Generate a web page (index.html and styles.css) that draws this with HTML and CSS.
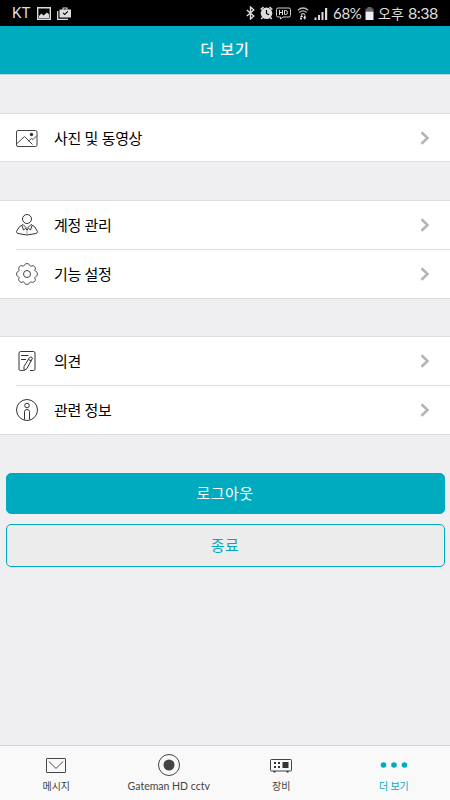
FILE: index.html
```html
<!DOCTYPE html>
<html lang="ko">
<head>
	<meta charset="utf-8" />
	<meta name="viewport" content="width=device-width, initial-scale=1">
	<title>더 보기</title>
	<link rel="stylesheet" href="styles.css">
</head>
<body>
	<div id="wrapper">
		<div class="status">
			<span class="carrier">KT</span>
			<svg class="st_picture" width="14" height="13" viewBox="0 0 14 13"><path fill="none" stroke="#ddd" stroke-width="1.4" d="M.7.7h12.6v11.6H.7z"/><path fill="#ddd" d="M2 11V9l2.500-2.500 2 2L10 5.500l2 2V11z"/></svg>
			<svg class="st_store" width="14" height="13" viewBox="0 0 14 13"><path fill="none" stroke="#ddd" stroke-width="1.300" d="M.7 4v8.300H11"/><path fill="#ddd" fill-rule="evenodd" d="M2.500 2.500h3V.5h5v2H14v8H2.500zM6.500 2.500h3v-1h-3zM5.700 6.300l2 2 3.500-3.500-.8-.8-2.700 2.700-1.200-1.200z"/></svg>
			<span class="spacer"></span>
			<svg class="st_bt" width="9" height="14" viewBox="0 0 9 14"><path fill="none" stroke="#ddd" stroke-width="1.400" d="M.8 4l7 6-3.300 3V1l3.300 3-7 6"/></svg>
			<svg class="st_alarm" width="13" height="14" viewBox="0 0 13 14"><circle cx="6.500" cy="7.300" r="5.800" fill="#ddd"/><path fill="none" stroke="#ddd" stroke-width="1.600" d="M.7 3.500L3.500 1M12.300 3.500L9.500 1M2.500 11.500L1.300 13M10.500 11.500l1.200 1.500"/><path fill="none" stroke="#000" stroke-width="1.200" d="M6.500 4v3.500l2.700 1.200"/></svg>
			<svg class="st_hd" width="15" height="13" viewBox="0 0 15 13"><path fill="none" stroke="#ccc" d="M2 1h11q1.500 0 1.500 1.500v6q0 1.500-1.500 1.500H7l-2.500 2V10H2Q.5 10 .5 8.500v-6Q.5 1 2 1z"/><path fill="none" stroke="#ddd" d="M3.500 3v5M6.500 3v5M3.500 5.500h3M8.500 3.500v4h1q2 0 2-2t-2-2z"/></svg>
			<svg class="st_wifi" width="12" height="13" viewBox="0 0 12 13"><path fill="none" stroke="#bbb" stroke-width="1.200" d="M.8 3.300q5.200-4.600 10.400 0M2.300 5.500q3.700-3.300 7.400 0M4 7.500q2-1.700 4 0"/><path fill="#ddd" d="M3 10l1.700-2.300L6.300 10zM6 10.300h3.400l-1.700 2.400zM3 10.500h2v2H3zM7 8.500h1.500v2H7z"/></svg>
			<svg class="st_signal" width="14" height="13" viewBox="0 0 14 13"><path fill="#ddd" d="M.5 10.500h2V13h-2zM4 8h2v5H4zM7.500 5h2v8h-2zM11 1h2.200v12H11z"/></svg>
			<span class="percent">68%</span>
			<svg class="st_battery" width="9" height="13" viewBox="0 0 9 13"><path fill="#666" d="M2.500 0h4v1.500h-4zM.5 1.500h8v3h-8z"/><path fill="#eee" d="M.5 4.500h8V13h-8z"/></svg>
			<span class="ampm">오후</span>
			<span class="clock">8:38</span>
		</div>

		<h1 class="title">더 보기</h1>

		<div class="content">
			<ul class="group">
				<li class="row">
					<svg class="icon" viewBox="0 0 24 24"><g fill="none" stroke="#444"><rect x="1.500" y="4.500" width="20.500" height="16" rx="1.500"/><path d="M2 17.500l7.500-7 8 8M13.500 15l3-2.500 1.500 1 4-4"/></g><circle cx="16.500" cy="8.500" r="1.700" fill="#333"/></svg>
					<span class="label">사진 및 동영상</span>
					<svg class="arrow" viewBox="0 0 10 14"><path d="M1.500 1.200L7.500 7l-6 5.800"/></svg>
				</li>
			</ul>

			<ul class="group">
				<li class="row">
					<svg class="icon" viewBox="0 0 24 24"><g fill="none" stroke="#333"><circle cx="12" cy="6" r="4.500"/><path d="M8 11.500Q4 12.500 1.500 18.500q0 1.500 1.500 2 9 3 18 0 1.500-.5 1.500-2Q20 12.500 16 11.500M8 11.500l4 4 4-4M7 12.500l1.500 4.500 2-1.500 1.500 1.500 1.500-1.500 2 1.500L17 12.500"/></g><path stroke="#999" d="M12 17v5"/></svg>
					<span class="label">계정 관리</span>
					<svg class="arrow" viewBox="0 0 10 14"><path d="M1.500 1.200L7.500 7l-6 5.800"/></svg>
				</li>
				<li class="row">
					<svg class="icon" viewBox="0 0 24 24"><g fill="none" stroke="#444"><path d="M9.200 3.500C9.800 1 14.200 1 14.800 3.500Q15.300 4.500 16.300 4C18.600 2.700 21.300 5.400 20 7.700Q19.500 8.700 20.500 9.200C23 9.800 23 14.200 20.500 14.800Q19.500 15.300 20 16.300C21.300 18.600 18.600 21.300 16.300 20Q15.300 19.500 14.800 20.500C14.200 23 9.800 23 9.200 20.500Q8.700 19.500 7.700 20C5.400 21.300 2.700 18.600 4 16.300Q4.500 15.300 3.500 14.800C1 14.200 1 9.800 3.500 9.200Q4.500 8.700 4 7.700C2.700 5.400 5.400 2.700 7.700 4Q8.700 4.500 9.200 3.500z"/><circle cx="12" cy="12" r="3.500"/></g></svg>
					<span class="label">기능 설정</span>
					<svg class="arrow" viewBox="0 0 10 14"><path d="M1.500 1.200L7.500 7l-6 5.800"/></svg>
				</li>
			</ul>

			<ul class="group">
				<li class="row">
					<svg class="icon" viewBox="0 0 24 24"><g fill="none" stroke="#333"><path d="M8.500 21.500H5.500q-1.500 0-1.500-1.500V4q0-1.500 1.500-1.500h13Q20 2.500 20 4v16q0 1.500-1.500 1.500H15M6 6.500h7.500M6 10.500h5"/><path d="M9 17.500L14.500 8.500q1.500-1.500 3 .5L12 19.500 9 21.500zM13.500 10.500l3 1.500"/></g></svg>
					<span class="label">의견</span>
					<svg class="arrow" viewBox="0 0 10 14"><path d="M1.500 1.200L7.500 7l-6 5.800"/></svg>
				</li>
				<li class="row">
					<svg class="icon" viewBox="0 0 24 24"><g fill="none" stroke="#333"><circle cx="12" cy="12" r="10.500"/><circle cx="12" cy="7.500" r="2.300"/><path d="M9.500 21.500V13.500q0-2 2.500-2t2.500 2v8"/></g></svg>
					<span class="label">관련 정보</span>
					<svg class="arrow" viewBox="0 0 10 14"><path d="M1.500 1.200L7.500 7l-6 5.800"/></svg>
				</li>
			</ul>

			<button class="btn logout">로그아웃</button>
			<button class="btn exit">종료</button>
		</div>

		<div class="tabs">
			<a class="tab">
				<svg viewBox="0 0 24 24"><g fill="none" stroke="#444"><rect x="2.500" y="5.500" width="19" height="14" rx=".5"/><path d="M5 8.500l7 7 7-7"/></g></svg>
				<span>메시지</span>
			</a>
			<a class="tab">
				<svg viewBox="0 0 24 24"><circle cx="12" cy="12" r="10.500" fill="none" stroke="#444"/><circle cx="12" cy="12" r="5.500" fill="#444"/></svg>
				<span class="latin">Gateman HD cctv</span>
			</a>
			<a class="tab">
				<svg viewBox="0 0 24 24"><rect x="1.500" y="6.500" width="21" height="11.500" rx=".8" fill="none" stroke="#444"/><path fill="#333" d="M13.500 9h6v6h-6zM5 9h2v2H5zM9 9h2v2H9zM5 13h2v2H5zM9 13h2v2H9zM4.500 18h2v1.500h-2zM17.500 18h2v1.500h-2z"/></svg>
				<span>장비</span>
			</a>
			<a class="tab active">
				<svg class="dots" viewBox="0 0 28 24"><g fill="#00abbf"><circle cx="3.500" cy="12" r="2.800"/><circle cx="14" cy="12" r="2.800"/><circle cx="24.500" cy="12" r="2.800"/></g></svg>
				<span>더 보기</span>
			</a>
		</div>
	</div>
</body>
</html>
```

FILE: styles.css
```css
* {box-sizing:border-box;}
body {margin:0; font-family:"Noto Sans CJK KR",sans-serif; color:#000; background:#efeff1;}
ul {margin:0; padding:0; list-style:none;}
svg {display:block; flex:none;}

#wrapper {display:flex; flex-direction:column; height:100vh;}

.status {display:flex; align-items:center; flex:none; height:26px; padding:0 12px 0 12px; color:#ddd; background:#000; line-height:26px; white-space:nowrap;}
.carrier {width:25px; font-family:Roboto,sans-serif; font-size:15px;}
.st_store {margin-left:6px;}
.spacer {flex:1;}
.st_alarm {margin-left:5px;}
.st_hd {margin-left:3px;}
.st_wifi {margin-left:6px;}
.st_signal {margin-left:5px;}
.percent {width:29px; margin-left:5px; font-family:Lato,sans-serif; font-size:15px; letter-spacing:-0.3px;}
.st_battery {margin-left:3px;}
.ampm {width:26px; margin-left:4px; padding-bottom:1px; font-size:14px;}
.clock {width:30px; margin-left:4px; font-family:Lato,sans-serif; font-size:16px; letter-spacing:-0.5px;}

.title {flex:none; height:49px; margin:0; border-bottom:1px solid #b4d5dc; color:#fff; background:#00abbf; font-size:15px; font-weight:500; line-height:46px; letter-spacing:1px; text-align:center;}

.content {flex:1; padding-top:38px;}
.group {margin-bottom:38px; border-top:1px solid #dedee0; border-bottom:1px solid #dedee0; background:#fff;}
.group:first-child .row {height:47px;}
.group:nth-child(2) {margin-bottom:37px;}
.row {position:relative; display:flex; align-items:center; height:48px; padding:0 20px 0 15px;}
.row + .row {height:49px;}
.row + .row::before {content:""; position:absolute; top:0; left:16px; right:0; height:1px; background:#dedee0;}
.icon {width:24px; height:24px;}
.label {flex:1; margin-left:15px; font-size:15px; line-height:24px; letter-spacing:-0.4px;}
.arrow {width:10px; height:14px; fill:none; stroke:#b5b5b5; stroke-width:2.6;}

.btn {display:block; width:439px; margin:0 auto 10px; padding:0 0 2px; border:1px solid #00abbf; border-radius:5px; font-family:inherit; font-size:15px; letter-spacing:0.5px; text-align:center;}
.logout {height:41px; color:#fff; background:#00abbf;}
.exit {height:43px; color:#00abbf; background:#ececec;}

.tabs {display:flex; flex:none; height:55px; border-top:1px solid #d2d2d5; background:#f9f9f9;}
.tab {display:flex; flex-direction:column; align-items:center; flex:1; padding-top:7px; color:#444; font-size:10px; line-height:16px; white-space:nowrap;}
.tab svg {width:24px; height:24px; margin-bottom:1px;}
.tab .dots {width:28px;}
.tab .latin {font-family:Lato,sans-serif; font-size:10.5px;}
.tab.active {color:#00abbf; letter-spacing:-0.2px;}
```
